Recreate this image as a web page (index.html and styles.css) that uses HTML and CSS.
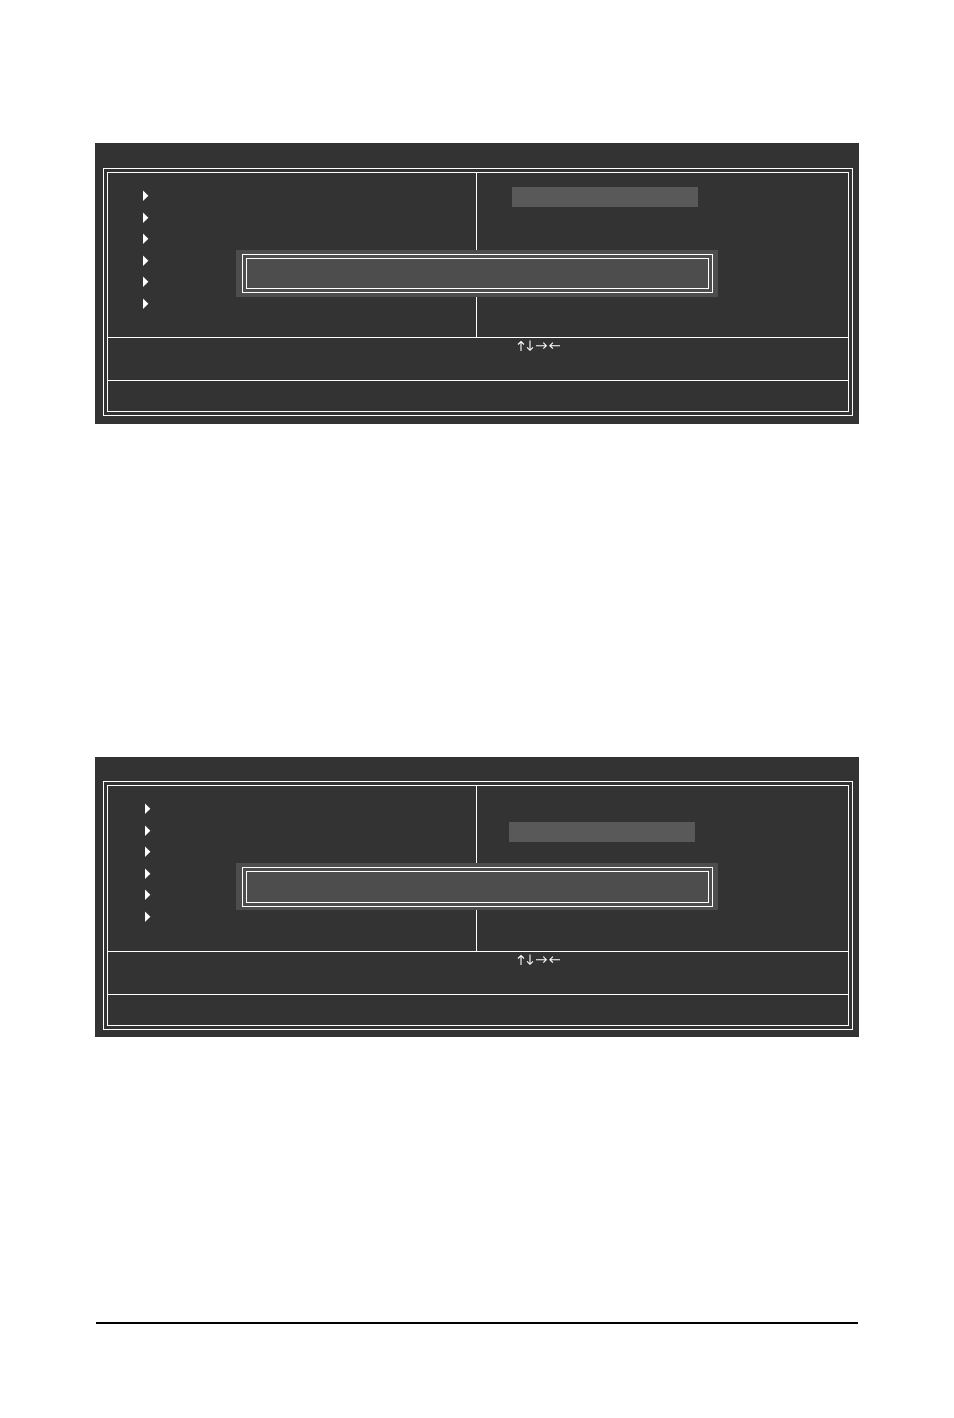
FILE: index.html
```html
<!DOCTYPE html>
<html lang="en">
<head>
  <meta charset="UTF-8" />
  <meta name="viewport" content="width=device-width, initial-scale=1.0"/>
  <link rel="stylesheet" href="styles.css">
</head>
<body>

  <svg class="defs" aria-hidden="true">
    <symbol id="marker" viewBox="0 0 6 12"><path d="M0 0.4L5.4 5.7L0 11Z" fill="#fff"/></symbol>
    <symbol id="arrows" viewBox="0 0 46 12">
      <g fill="none" stroke="#fff" stroke-width="1.1">
        <path d="M6 11V1.5M3 4.5L6 1.5L9 4.5"/>
        <path d="M15 0.5V10.3M12 7.3L15 10.3L18 7.3"/>
        <path d="M21 5.7H31.3M28.3 2.7L31.3 5.7L28.3 8.7"/>
        <path d="M45 5.7H34.9M37.9 2.7L34.9 5.7L37.9 8.7"/>
      </g>
    </symbol>
  </svg>

  <main class="page">
    <section class="screen first">
      <div class="frame">
        <div class="frame-inner">
          <div class="menu">
            <ul class="entries">
              <li><svg><use href="#marker"/></svg></li>
              <li><svg><use href="#marker"/></svg></li>
              <li><svg><use href="#marker"/></svg></li>
              <li><svg><use href="#marker"/></svg></li>
              <li><svg><use href="#marker"/></svg></li>
              <li><svg><use href="#marker"/></svg></li>
            </ul>
            <div class="options"><div class="selected"></div></div>
            <div class="popup">
              <div class="popup-frame"><div class="popup-inner"></div></div>
            </div>
          </div>
          <div class="keys"><svg role="img" aria-label="↑↓→←"><use href="#arrows"/></svg></div>
          <div class="hint"></div>
        </div>
      </div>
    </section>

    <section class="screen second">
      <div class="frame">
        <div class="frame-inner">
          <div class="menu">
            <ul class="entries">
              <li><svg><use href="#marker"/></svg></li>
              <li><svg><use href="#marker"/></svg></li>
              <li><svg><use href="#marker"/></svg></li>
              <li><svg><use href="#marker"/></svg></li>
              <li><svg><use href="#marker"/></svg></li>
              <li><svg><use href="#marker"/></svg></li>
            </ul>
            <div class="options"><div class="selected"></div></div>
            <div class="popup">
              <div class="popup-frame"><div class="popup-inner"></div></div>
            </div>
          </div>
          <div class="keys"><svg role="img" aria-label="↑↓→←"><use href="#arrows"/></svg></div>
          <div class="hint"></div>
        </div>
      </div>
    </section>

    <hr class="rule">
  </main>

</body>
</html>
```
FILE: styles.css
```css
:root {
  --screen: #333333;
  --popup: #4d4d4d;
  --selected: #595959;
  --line: #ffffff;
}

* {
  box-sizing: border-box;
}

body {
  margin: 0;
  background: #fff;
  font-family: Inter, sans-serif;
}

.defs {
  display: none;
}

.page {
  padding: 143px 95px 94px;
}

.screen {
  padding: 25px 6px 8px 8px;
  background: var(--screen);
  color: var(--line);
}

.second {
  margin-top: 333px;
  padding-top: 24px;
  padding-bottom: 7px;
}

.frame {
  border: 1px solid var(--line);
  padding: 3px;
}

.frame-inner {
  border: 1px solid var(--line);
}

.menu {
  position: relative;
  display: grid;
  grid-template-columns: 368fr 372fr;
  min-height: 164px;
}

.second .menu {
  min-height: 165px;
}

.entries {
  display: flex;
  flex-direction: column;
  justify-content: space-between;
  height: 120px;
  margin: 17px 0 0;
  padding: 0 0 0 35px;
  list-style: none;
}

.second .entries {
  padding-left: 37px;
}

.entries li {
  height: 12px;
}

.entries svg {
  display: block;
  width: 6px;
  height: 12px;
}

.options {
  border-left: 1px solid var(--line);
  padding: 14px 0 0 35px;
}

.second .options {
  padding: 36px 0 0 32px;
}

.selected {
  width: 186px;
  max-width: 100%;
  height: 20px;
  background: var(--selected);
}

/* message box over the menu */
.popup {
  position: absolute;
  top: 77px;
  left: 128px;
  right: 130px;
  height: 47px;
  padding: 4px 5px 4px 6px;
  background: var(--popup);
}

.second .popup {
  padding-bottom: 3px;
}

.popup-frame {
  height: 100%;
  border: 1px solid var(--line);
  padding: 3px;
}

.popup-inner {
  height: 100%;
  border: 1px solid var(--line);
}

.keys {
  height: 43px;
  border-top: 1px solid var(--line);
  padding: 2px 0 0 55%;
}

.keys svg {
  display: block;
  width: 46px;
  height: 12px;
}

.hint {
  height: 31px;
  border-top: 1px solid var(--line);
}

.rule {
  height: 2px;
  margin: 285px 1px 0;
  border: 0;
  background: #000;
}
```
